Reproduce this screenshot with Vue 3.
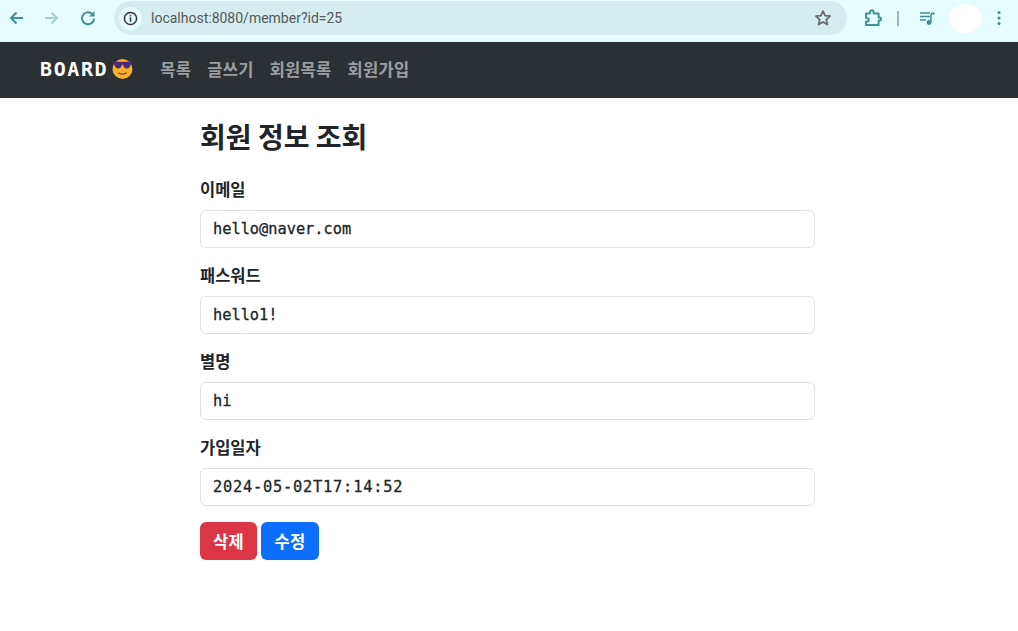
<script setup>
const fields = [
  { label: '이메일', value: 'hello@naver.com' },
  { label: '패스워드', value: 'hello1!' },
  { label: '별명', value: 'hi' },
  { label: '가입일자', value: '2024-05-02T17:14:52', wide: true },
]
const links = ['목록', '글쓰기', '회원목록', '회원가입']
</script>

<template>
  <div class="page">
    <header class="chrome">
      <div class="nav-icons">
        <svg class="ic" viewBox="0 0 16 16"><path d="M15 8H3M8.500 2.500L3 8l5.500 5.500" fill="none" stroke="#3f8f96" stroke-width="2"/></svg>
        <svg class="ic" viewBox="0 0 16 16"><path d="M1 8h12M7.500 2.500L13 8l-5.500 5.500" fill="none" stroke="#a5d0d4" stroke-width="2"/></svg>
        <svg class="ic" viewBox="0 0 16 16"><path d="M14 8.500A6 6 0 1 1 12 3.800" fill="none" stroke="#3f8f96" stroke-width="2"/><path d="M14.500 1v5.500H9z" fill="#3f8f96"/></svg>
      </div>
      <div class="omnibox">
        <span class="info">
          <svg viewBox="0 0 16 16" width="15" height="15"><circle cx="8" cy="8" r="6.500" fill="none" stroke="#333" stroke-width="1.600"/><path d="M8 7v4.400M8 4.300v1.500" stroke="#333" stroke-width="1.700"/></svg>
        </span>
        <span class="url">localhost:8080/member?id=25</span>
        <svg class="star" viewBox="0 0 18 18" width="18" height="18"><path d="M9 2l2.100 4.700 5 .5-3.800 3.400 1.100 5L9 13l-4.400 2.600 1.100-5L1.900 7.200l5-.5z" fill="none" stroke="#6b6b6b" stroke-width="1.800" stroke-linejoin="round"/></svg>
      </div>
      <div class="tools">
        <svg class="puzzle" viewBox="0 0 18 18" width="18" height="18"><path d="M2 4.500h4V3a1.800 1.800 0 0 1 3.600 0v1.500h5v4h1a1.500 1.500 0 0 1 0 3h-1V16H2v-3.500h1.200a1.700 1.700 0 0 0 0-3.400H2z" fill="none" stroke="#3f8f96" stroke-width="1.900" stroke-linejoin="round"/></svg>
        <span class="divider"></span>
        <svg class="media" viewBox="0 0 18 18" width="18" height="18"><path d="M2 4h10M2 7.500h10M2 11h6" stroke="#3f8f96" stroke-width="1.500"/><path d="M13 5v8.500" stroke="#3f8f96" stroke-width="1.500"/><path d="M13 4.500h3.500" stroke="#3f8f96" stroke-width="2"/><circle cx="11" cy="13.500" r="2.400" fill="#3f8f96"/></svg>
        <span class="avatar"></span>
        <svg class="kebab" viewBox="0 0 4 16" width="4" height="16"><circle cx="2" cy="2.500" r="1.500" fill="#3f8f96"/><circle cx="2" cy="8" r="1.500" fill="#3f8f96"/><circle cx="2" cy="13.500" r="1.500" fill="#3f8f96"/></svg>
      </div>
    </header>

    <nav class="navbar">
      <span class="brand">BOARD</span>
      <svg class="emoji" viewBox="0 0 20 20" width="21" height="21">
        <circle cx="10" cy="10.500" r="9.500" fill="#fbb02d"/>
        <path d="M1 3.500h18v2l-1 0c-.3 3-2 4.500-4 4.500s-3.300-1.500-3.500-3.500h-1C9.300 8.500 8 10 6 10S2.300 8.500 2 5.500H1z" fill="#4b2a7b"/>
        <path d="M6 14c2.500 1.800 5.500 1.800 8 0" fill="none" stroke="#7a4a10" stroke-width="1.200"/>
      </svg>
      <ul class="links">
        <li v-for="l in links" :key="l">{{ l }}</li>
      </ul>
    </nav>

    <main class="content">
      <h2 class="title">회원 정보 조회</h2>
      <div v-for="f in fields" :key="f.label" class="field">
        <label class="label">{{ f.label }}</label>
        <input class="input" :class="{ wide: f.wide }" :value="f.value" readonly />
      </div>
      <div class="actions">
        <button class="btn danger">삭제</button>
        <button class="btn primary">수정</button>
      </div>
    </main>
  </div>
</template>

<style>
html, body { margin: 0; background: #fff; }
</style>

<style scoped>
.page {
  width: 1018px;
  height: 631px;
  overflow: hidden;
  font-family: "Noto Sans CJK KR", "Noto Sans", sans-serif;
  color: #212529;
}
.chrome {
  height: 42px;
  background: #e6fdff;
  display: flex;
  align-items: center;
  box-sizing: border-box;
  padding-bottom: 6px;
}
.nav-icons {
  display: flex;
  gap: 20px;
  margin-left: 8px;
  width: 106px;
}
.ic { width: 16px; height: 16px; }
.omnibox {
  width: 733px;
  height: 34px;
  border-radius: 17px;
  background: #d4eeef;
  display: flex;
  align-items: center;
}
.info {
  width: 23px;
  height: 23px;
  margin-left: 5px;
  border-radius: 50%;
  background: #e6fdff;
  display: flex;
  align-items: center;
  justify-content: center;
}
.url {
  margin-left: 9px;
  font-family: "Roboto", sans-serif;
  font-size: 14px;
  color: #54585a;
  flex: 1;
}
.star { margin-right: 15px; }
.tools {
  display: flex;
  align-items: center;
  margin-left: 17px;
}
.divider {
  width: 2px;
  height: 15px;
  background: #9fb6b8;
  margin-left: 15px;
  margin-right: 19px;
}
.avatar {
  width: 33px;
  height: 29px;
  border-radius: 50%;
  background: #fff;
  margin-left: 13px;
}
.kebab { margin-left: 15px; }
.navbar {
  height: 56px;
  background: #2b3035;
  display: flex;
  align-items: center;
  padding-left: 40px;
}
.brand {
  font-family: "DejaVu Sans Mono", monospace;
  font-weight: 700;
  font-size: 20px;
  letter-spacing: 1.600px;
  color: #fff;
  line-height: 1;
  margin-top: -3px;
}
.emoji { margin-left: 4px; margin-top: -3px; }
.links {
  display: flex;
  gap: 16px;
  list-style: none;
  margin: -3px 0 0 27px;
  padding: 0;
  font-size: 16.500px;
  letter-spacing: 0.300px;
  font-weight: 700;
  color: rgba(255, 255, 255, 0.55);
}
.content {
  width: 615px;
  margin-left: 200px;
}
.title {
  margin: 18px 0 0;
  font-size: 28px;
  font-weight: 700;
  line-height: 40px;
  height: 40px;
  color: #212529;
}
.field { margin-top: 15px; }
.title + .field { margin-top: 21px; }
.label {
  display: block;
  font-size: 16.500px;
  font-weight: 700;
  line-height: 24px;
  margin-bottom: 9px;
}
.input {
  display: block;
  width: 100%;
  height: 38px;
  box-sizing: border-box;
  border: 1px solid #dee2e6;
  border-radius: 6px;
  padding: 0 12px;
  font-family: "DejaVu Sans Mono", monospace;
  font-size: 15.300px;
  -webkit-text-stroke: 0.300px #212529;
  color: #212529;
  outline: none;
  background: #fff;
}
.input.wide { letter-spacing: 0.800px; }
.actions {
  display: flex;
  gap: 4px;
  margin-top: 16px;
}
.btn {
  height: 38px;
  border: none;
  border-radius: 6px;
  padding: 0;
  font-family: inherit;
  font-size: 16.500px;
  letter-spacing: 0.300px;
  font-weight: 700;
  color: #fff;
}
.danger { background: #dc3545; width: 57px; }
.primary { background: #0d6efd; width: 58px; }
</style>
